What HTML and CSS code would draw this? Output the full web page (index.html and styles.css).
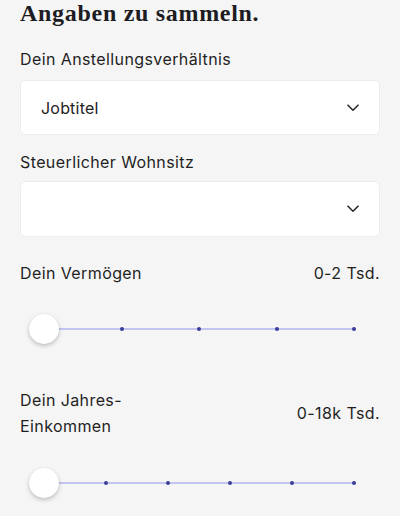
FILE: index.html
```html
<!DOCTYPE html>
<html lang="de">
<head>
<meta charset="utf-8">
<link rel="stylesheet" href="styles.css">
</head>
<body>
<main class="form">
  <h1 class="title">Angaben zu sammeln.</h1>

  <label class="label label-first">Dein Anstellungsverhältnis</label>
  <div class="select select-first">
    <span class="select-value">Jobtitel</span>
    <svg class="chevron" width="12" height="8" viewBox="0 0 12 8"><path d="M1 1.2 L6 6.2 L11 1.2" fill="none" stroke="#2b2b2b" stroke-width="1.6" stroke-linecap="round" stroke-linejoin="round"/></svg>
  </div>

  <label class="label label-second">Steuerlicher Wohnsitz</label>
  <div class="select select-second">
    <span class="select-value"></span>
    <svg class="chevron" width="12" height="8" viewBox="0 0 12 8"><path d="M1 1.2 L6 6.2 L11 1.2" fill="none" stroke="#2b2b2b" stroke-width="1.6" stroke-linecap="round" stroke-linejoin="round"/></svg>
  </div>

  <div class="row row-assets">
    <span class="row-label">Dein Vermögen</span>
    <span class="row-value">0-2 Tsd.</span>
  </div>
  <div class="slider slider-assets">
    <div class="track">
      <span class="tick"></span><span class="tick"></span><span class="tick"></span><span class="tick"></span><span class="tick"></span>
    </div>
    <span class="thumb"></span>
  </div>

  <div class="row row-income">
    <span class="row-label row-label-wrap">Dein Jahres-Einkommen</span>
    <span class="row-value">0-18k Tsd.</span>
  </div>
  <div class="slider slider-income">
    <div class="track">
      <span class="tick"></span><span class="tick"></span><span class="tick"></span><span class="tick"></span><span class="tick"></span><span class="tick"></span>
    </div>
    <span class="thumb"></span>
  </div>
</main>
</body>
</html>
```

FILE: styles.css
```css
* { box-sizing: border-box; }
html, body { margin: 0; padding: 0; }
body {
  background: #f5f5f5;
  font-family: Inter, "Noto Sans", sans-serif;
  color: #1f1f1f;
  width: 400px;
  height: 516px;
  overflow: hidden;
}
.form {
  display: flex;
  flex-direction: column;
  padding: 0 20px 0 20px;
}
.title {
  margin: 0 0 23px 0;
  font-family: "Liberation Serif", serif;
  font-weight: 700;
  font-size: 24px;
  line-height: 26px;
  color: #1c1c22;
  letter-spacing: 0.7px;
}
.label {
  display: block;
  font-size: 16px;
  line-height: 20px;
  letter-spacing: 0.4px;
  color: #1f1f1f;
}
.label-first { margin-bottom: 11px; }
.label-second { margin-top: 17px; margin-bottom: 9px; }
.select {
  display: flex;
  align-items: center;
  justify-content: space-between;
  background: #ffffff;
  border: 1px solid #ececec;
  border-radius: 5px;
  padding: 0 20px 0 20px;
}
.select-first { height: 55px; }
.select-second { height: 56px; }
.select-value {
  font-size: 16px;
  line-height: 20px;
  letter-spacing: 0.2px;
  color: #222;
}
.chevron { display: block; }
.row {
  display: flex;
  align-items: center;
  justify-content: space-between;
  font-size: 16px;
  line-height: 20px;
  letter-spacing: 0.4px;
}
.row-assets { margin-top: 26px; }
.row-income { margin-top: 43px; }
.row-label-wrap { max-width: 150px; line-height: 26px; }
.row-value { text-align: right; }
.slider {
  position: relative;
  height: 30px;
  display: flex;
  align-items: center;
}
.slider-assets { margin-top: 31px; }
.slider-income { margin-top: 29px; }
.track {
  flex: 1;
  margin: 0 26px 0 24px;
  height: 4px;
  display: flex;
  justify-content: space-between;
  align-items: center;
  background: linear-gradient(#c3c4ef, #c3c4ef) center / 100% 2px no-repeat;
}
.tick {
  width: 4px;
  height: 4px;
  border-radius: 50%;
  background: #3b3e98;
  margin: 0 -2px;
}
.thumb {
  position: absolute;
  left: 9px;
  top: 0;
  width: 30px;
  height: 30px;
  border-radius: 50%;
  background: #ffffff;
  box-shadow: 0 2px 4px rgba(0,0,0,0.22), 0 0 1px rgba(0,0,0,0.08);
}
```
